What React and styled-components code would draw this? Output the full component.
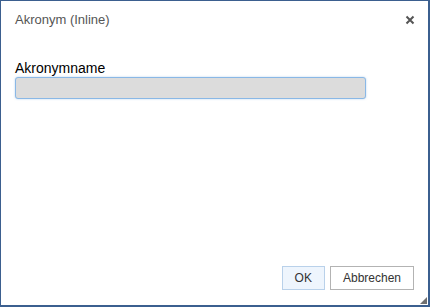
import React from "react";
import styled, { createGlobalStyle } from "styled-components";

const GlobalStyle = createGlobalStyle`
  html, body {
    margin: 0;
    padding: 0;
    background: #ffffff;
  }
  body {
    font-family: "Liberation Sans", Arial, sans-serif;
  }
`;

const Dialog = styled.div`
  position: relative;
  box-sizing: border-box;
  width: 430px;
  height: 307px;
  background: #ffffff;
  border: 1px solid #3b5f8f;
  border-right-width: 2px;
  border-bottom-width: 2px;
  display: flex;
  flex-direction: column;
`;

const Header = styled.div`
  display: flex;
  align-items: center;
  justify-content: space-between;
  height: 37px;
  padding: 0 12px 0 14px;
`;

const Title = styled.span`
  font-size: 13px;
  color: #555555;
`;

const Close = styled.button`
  border: none;
  background: none;
  padding: 0;
  width: 12px;
  height: 12px;
  display: flex;
  align-items: center;
  justify-content: center;
  cursor: pointer;
`;

const Body = styled.div`
  flex: 1;
  padding: 22px 14px 0 14px;
`;

const Label = styled.label`
  display: block;
  font-size: 14px;
  color: #000000;
  line-height: 16px;
`;

const Input = styled.input`
  box-sizing: border-box;
  display: block;
  width: 351px;
  height: 22px;
  margin-top: 1px;
  background: #dcdcdc;
  border: 1px solid #8ab8e6;
  border-radius: 3px;
  box-shadow: 0 0 2px rgba(100, 160, 220, 0.5);
  outline: none;
`;

const Footer = styled.div`
  display: flex;
  justify-content: flex-end;
  gap: 5px;
  padding: 0 14px 15px 0;
`;

const Button = styled.button`
  box-sizing: border-box;
  height: 24px;
  padding: 0 12px;
  font-family: "Liberation Sans", Arial, sans-serif;
  font-size: 12px;
  color: #333333;
  background: ${(p) => (p.$primary ? "#eef5fd" : "#ffffff")};
  border: 1px solid ${(p) => (p.$primary ? "#b9d1ea" : "#b3b3b3")};
  border-radius: 0;
`;

const Grip = styled.div`
  position: absolute;
  right: 1px;
  bottom: 1px;
  width: 0;
  height: 0;
  border-left: 7px solid transparent;
  border-bottom: 7px solid #707070;
`;

export default function App() {
  return (
    <>
      <GlobalStyle />
      <Dialog>
        <Header>
          <Title>Akronym (Inline)</Title>
          <Close aria-label="Schließen">
            <svg width="10" height="10" viewBox="0 0 10 10">
              <path d="M1.5 1.5L8.5 8.5M8.5 1.5L1.5 8.5" stroke="#555" strokeWidth="2" />
            </svg>
          </Close>
        </Header>
        <Body>
          <Label>Akronymname</Label>
          <Input type="text" />
        </Body>
        <Footer>
          <Button $primary>OK</Button>
          <Button>Abbrechen</Button>
        </Footer>
        <Grip />
      </Dialog>
    </>
  );
}
